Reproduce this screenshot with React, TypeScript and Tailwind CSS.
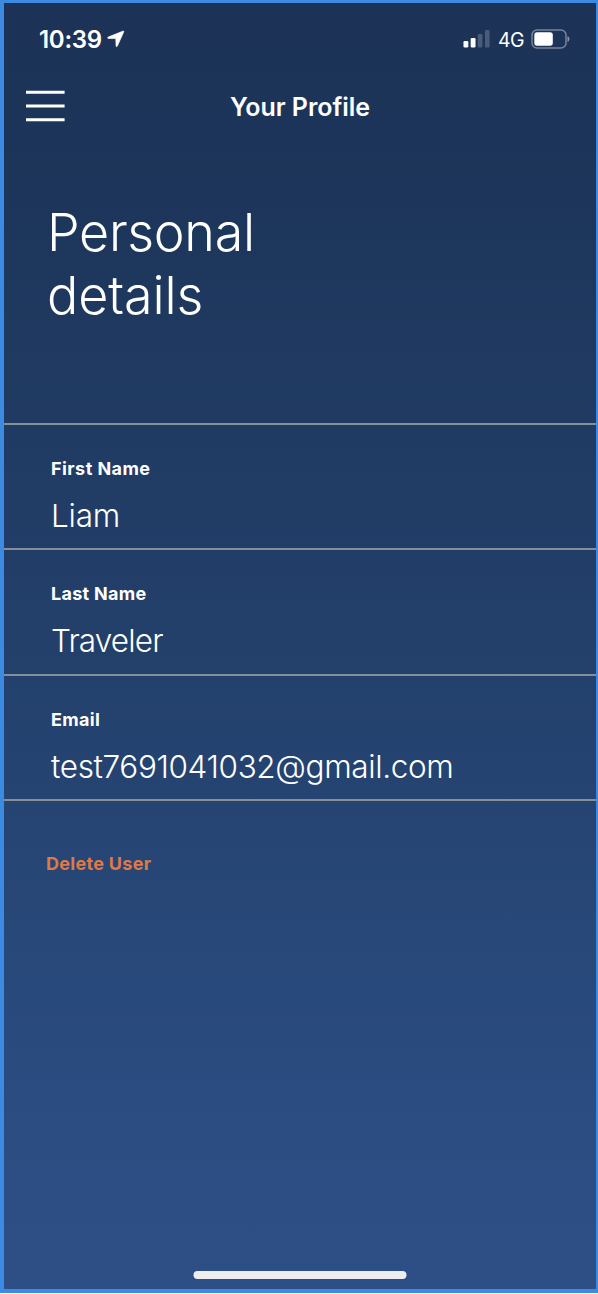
function StatusBar() {
  return (
    <div className="flex h-[66px] items-center justify-between pt-[6px] pr-[25px] pl-[35px] text-white">
      <div className="flex items-center">
        <span className="w-[64px] pt-px text-[24px] leading-7 font-semibold tracking-[-0.3px] whitespace-nowrap">10:39</span>
        <svg className="ml-[4px] h-[18px] w-[18px]" viewBox="0 0 18 18" fill="currentColor" stroke="currentColor" strokeWidth="0.6">
          <path d="M16.1 1.1 1.2 7c-.9.4-.7 1.5.2 1.5l7.4.1.2 7.2c0 1 1 1.2 1.4.3l6.4-14.3c.2-.5-.2-.9-.7-.7Z" />
        </svg>
      </div>
      <div className="flex items-center">
        <svg className="h-[18px] w-[28px]" viewBox="0 0 28 18" fill="currentColor">
          <rect x="0.5" y="11" width="4.8" height="6.5" rx="1.2" />
          <rect x="7.7" y="8" width="4.8" height="9.5" rx="1.2" />
          <rect x="14.8" y="4" width="4.6" height="13.5" rx="1.2" opacity=".2" />
          <rect x="22" y="0" width="4.6" height="17.5" rx="1.2" opacity=".2" />
        </svg>
        <span className="ml-[7px] w-[27px] pt-px text-[19.5px] leading-6 font-normal tracking-[-0.5px] whitespace-nowrap">4G</span>
        <svg className="ml-[6px] h-[20px] w-[40px]" viewBox="0 0 40 20" fill="none">
          <rect x="1" y="1" width="34" height="18" rx="5" stroke="currentColor" strokeWidth="1.5" opacity=".4" />
          <rect x="3.3" y="3.3" width="18.5" height="13.4" rx="2.7" fill="currentColor" />
          <path d="M36.5 7.2c2.5.8 2.5 4.8 0 5.6Z" fill="currentColor" opacity=".5" />
        </svg>
      </div>
    </div>
  );
}

function Header() {
  return (
    <header className="grid h-[74px] grid-cols-[1fr_auto_1fr] items-center pl-[22px] pr-[22px] text-white">
      <button aria-label="Menu" className="w-[39px]">
        <svg className="block h-[32px] w-[39px]" viewBox="0 0 39 32" stroke="currentColor" strokeWidth="3">
          <path d="M0 2.2h38.6M0 16h38.6M0 29.8h38.6" />
        </svg>
      </button>
      <h1 className="pt-[2px] text-[25px] leading-8 font-semibold tracking-[-0.05px] whitespace-nowrap">Your Profile</h1>
      <span />
    </header>
  );
}

const fields = [
  { label: "First Name", value: "Liam", labelSpacing: "tracking-[0.45px]", valueSpacing: "tracking-[-0.2px]" },
  { label: "Last Name", value: "Traveler", labelSpacing: "tracking-[0.3px]", valueSpacing: "tracking-[-0.85px]" },
  { label: "Email", value: "test7691041032@gmail.com", labelSpacing: "tracking-[0.3px]", valueSpacing: "tracking-[-0.37px]" },
];

export default function App() {
  return (
    <div className="flex h-[1293px] w-[598px] flex-col overflow-hidden border-t-3 border-r-2 border-b-4 border-l-4 border-[#3d8ae2] bg-[linear-gradient(180deg,#1c3357_0%,#1d355a_14%,#23406b_50%,#2b4d82_88%,#2d4f86_100%)] font-['Inter','Liberation_Sans',sans-serif]">
      <StatusBar />
      <Header />
      <h2 className="mt-[58px] pl-[43px] text-[52px] leading-[63px] font-light text-white">
        <span className="block tracking-[-0.3px]">Personal</span>
        <span className="block tracking-[-0.1px]">details</span>
      </h2>
      <dl className="mt-[96px] border-t-2 border-[#858f98]">
        {fields.map((field) => (
          <div key={field.label} className="h-[125.4px] border-b-2 border-[#858f98] pt-[32px] pl-[47px] text-white">
            <dt className={`text-[18px] leading-[24px] font-bold whitespace-nowrap ${field.labelSpacing}`}>{field.label}</dt>
            <dd className={`mt-[15px] text-[31.5px] leading-[40px] font-light whitespace-nowrap ${field.valueSpacing}`}>{field.value}</dd>
          </div>
        ))}
      </dl>
      <button className="mt-[51px] self-start pl-[42px] text-[18px] leading-6 font-bold tracking-[0.3px] whitespace-nowrap text-[#df7946]">Delete User</button>
      <div className="mt-auto mb-[10px] h-2 w-[213px] translate-x-[-0.5px] self-center rounded-full bg-[#eeeeef]" />
    </div>
  );
}
